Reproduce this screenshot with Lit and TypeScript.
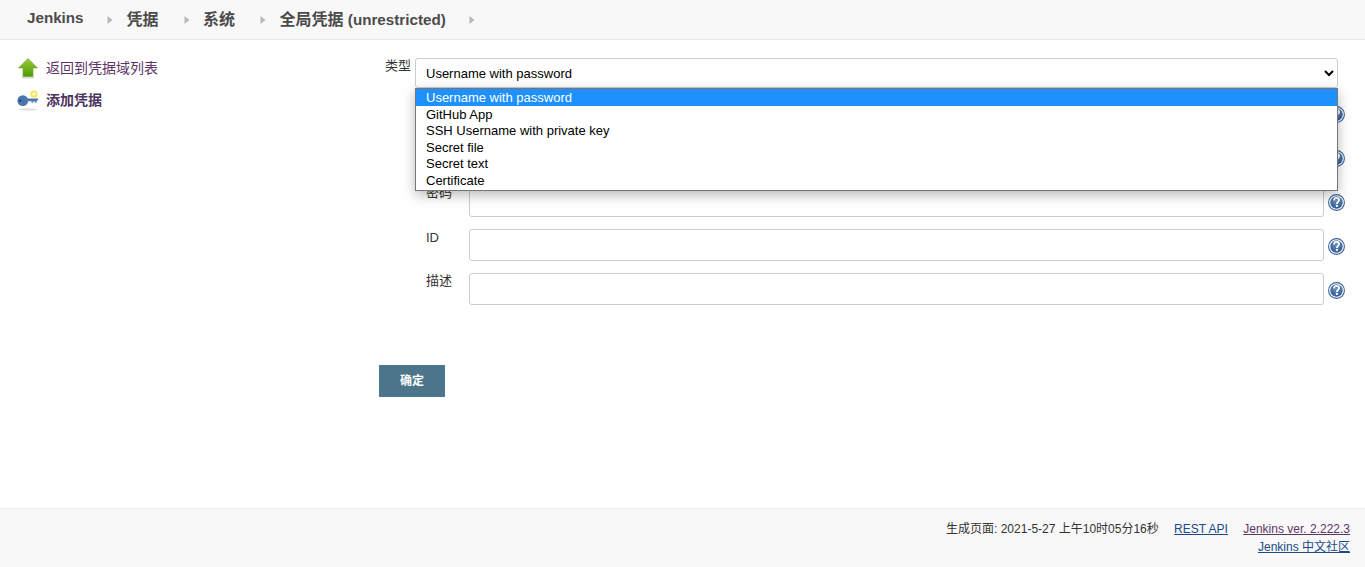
import { LitElement, html, css, svg } from "lit";
import { customElement } from "lit/decorators.js";

const caret = html`<svg class="caret" width="6" height="10" viewBox="0 0 6 10"><path d="M0.5 1 L5.5 5 L0.5 9 Z" fill="#b8b8b8"/></svg>`;

const help = svg`<svg class="help" width="17" height="17" viewBox="0 0 17 17">
  <defs><radialGradient id="hg" cx="50%" cy="35%" r="65%"><stop offset="0" stop-color="#6f90bd"/><stop offset="1" stop-color="#2f5a94"/></radialGradient></defs>
  <circle cx="8.5" cy="8.5" r="7.9" fill="#fff" stroke="#3a659c" stroke-width="1.1"/>
  <circle cx="8.5" cy="8.5" r="6.2" fill="url(#hg)"/>
  <path d="M6 6.5 C6 4.6 7.2 3.8 8.6 3.8 C10.1 3.8 11.1 4.7 11.1 6.1 C11.1 7.9 8.9 8 8.9 9.9" fill="none" stroke="#fff" stroke-width="1.8"/>
  <rect x="7.9" y="10.9" width="2" height="2" fill="#fff"/>
</svg>`;

@customElement("app-root")
export class AppRoot extends LitElement {
  static styles = css`
    :host {
      display: flex;
      flex-direction: column;
      min-height: 567px;
      font-family: "Liberation Sans", "Noto Sans CJK SC", Arial, sans-serif;
      font-size: 13px;
      color: #333;
      background: #fff;
    }
    .crumbs {
      height: 39px;
      box-sizing: border-box;
      background: #f8f8f8;
      box-shadow: 0 1px 0 #e9e9e9;
      display: flex;
      align-items: center;
      padding: 0 0 4px 27px;
      font-size: 16px;
      font-weight: 700;
      color: #4b4b4b;
      margin-bottom: 1px;
    }
    .crumbs span { white-space: nowrap; }
    .crumbs .lat { font-size: 15.2px; }
    .crumbs .first { margin-right: -1.5px; }
    .caret { margin: 4px 13.5px 0 25px; flex: none; }
    .caret:last-child { margin-left: 23px; }
    main { flex: 1; display: flex; }
    aside {
      width: 379px;
      flex: none;
      box-sizing: border-box;
      padding: 16px 0 0 17px;
      font-size: 14px;
    }
    .task { display: flex; align-items: center; height: 24px; margin-bottom: 8px; }
    .task svg { flex: none; margin-right: 7px; }
    .task a { color: #5c3566; text-decoration: none; line-height: 24px; }
    .task.cur a { font-weight: 700; color: #4d3460; }
    .form { flex: 1; position: relative; padding: 18px 0 0 0; }
    .kind { display: flex; align-items: flex-start; height: 39px; }
    .kind label { margin-left: 6px; width: 30px; flex: none; white-space: nowrap; line-height: 16px; }
    .kind select {
      width: 923px;
      height: 30px;
      box-sizing: border-box;
      border: 1px solid #ccc;
      border-radius: 3px;
      background: #fff;
      padding: 0 6px;
      font: 13px "Liberation Sans", "Noto Sans CJK SC", sans-serif;
      color: #000;
    }
    .row { display: flex; align-items: flex-start; height: 44px; }
    .row label { width: 90px; flex: none; box-sizing: border-box; padding-left: 47px; line-height: 16px; }
    .row label.id { padding-top: 1px; }
    .row input {
      width: 855px;
      height: 32px;
      box-sizing: border-box;
      border: 1px solid #ccc;
      border-radius: 3px;
      background: #fff;
      margin: 0;
    }
    .help { margin: 9px 0 0 4px; flex: none; }
    .submit {
      display: block;
      width: 66px;
      height: 32px;
      margin-top: 48px;
      border: 1px solid #4d7a93;
      background: #4b758b;
      color: #fff;
      font: 700 12px "Liberation Sans", "Noto Sans CJK SC", sans-serif;
      padding: 0 0 4px;
    }
    .list {
      position: absolute;
      left: 36px;
      top: 48px;
      width: 923px;
      height: 103px;
      box-sizing: border-box;
      background: #fff;
      border: 1px solid #767676;
      box-shadow: 0 4px 12px rgba(0, 0, 0, 0.28);
      color: #000;
      z-index: 2;
    }
    .opt { height: 16.5px; line-height: 17px; padding-left: 10px; white-space: nowrap; }
    .opt.sel { background: #1e90ff; color: #fff; height: 16.75px; line-height: 17px; }
    footer {
      height: 59px;
      box-sizing: border-box;
      background: #f8f8f8;
      border-top: 1px solid #eee;
      padding: 11px 15px 0 0;
      font-size: 12px;
      text-align: right;
      line-height: 18px;
      color: #333;
    }
    footer a { color: #204a87; }
    footer a.v { color: #5c3566; margin-left: 12px; }
    footer .api { margin-left: 12px; }
  `;

  render() {
    return html`
      <nav class="crumbs">
        <span class="lat first">Jenkins</span>${caret}<span>凭据</span>${caret}<span>系统</span>${caret}<span>全局凭据<span class="lat"> (unrestricted)</span></span>${caret}
      </nav>
      <main>
        <aside>
          <div class="task">
            <svg width="22" height="24" viewBox="0 0 22 24">
              <defs><linearGradient id="ga" x1="0" y1="0" x2="0" y2="1"><stop offset="0" stop-color="#9ccb3c"/><stop offset="1" stop-color="#4e9a06"/></linearGradient></defs>
              <ellipse cx="11" cy="21.5" rx="7" ry="1.3" fill="#ddd"/>
              <path d="M11 2.5 L20.5 12 L16 12 L16 20.5 L6 20.5 L6 12 L1.5 12 Z" fill="url(#ga)" stroke="#6ea52b" stroke-width=".6"/>
            </svg>
            <a href="#">返回到凭据域列表</a>
          </div>
          <div class="task cur">
            <svg width="22" height="24" viewBox="0 0 22 24">
              <ellipse cx="11" cy="21.5" rx="10" ry="1.2" fill="#e2e2e2"/>
              <circle cx="17" cy="6" r="2.6" fill="#fff" stroke="#f4e94a" stroke-width="2"/>
              <circle cx="5.8" cy="12.6" r="5.4" fill="#4a76ad"/>
              <circle cx="3.2" cy="12.6" r="1.2" fill="#1f3f6c"/>
              <path d="M9 10.6 H20.5 Q21.8 11.7 20.5 12.8 H19.6 V14.6 H17.8 V13.2 H16.4 V14.6 H14.6 V13.2 H9 Z" fill="#4a76ad"/>
            </svg>
            <a href="#">添加凭据</a>
          </div>
        </aside>
        <section class="form">
          <div class="kind">
            <label>类型</label>
            <select><option>Username with password</option></select>
          </div>
          <div class="row"><label></label><input />${help}</div>
          <div class="row"><label></label><input />${help}</div>
          <div class="row"><label>密码</label><input />${help}</div>
          <div class="row"><label class="id">ID</label><input />${help}</div>
          <div class="row"><label>描述</label><input />${help}</div>
          <button class="submit">确定</button>
          <div class="list">
            <div class="opt sel">Username with password</div>
            <div class="opt">GitHub App</div>
            <div class="opt">SSH Username with private key</div>
            <div class="opt">Secret file</div>
            <div class="opt">Secret text</div>
            <div class="opt">Certificate</div>
          </div>
        </section>
      </main>
      <footer>
        <div>生成页面: 2021-5-27 上午10时05分16秒 <a class="api" href="#">REST API</a> <a class="v" href="#">Jenkins ver. 2.222.3</a></div>
        <div><a href="#">Jenkins 中文社区</a></div>
      </footer>
    `;
  }
}
